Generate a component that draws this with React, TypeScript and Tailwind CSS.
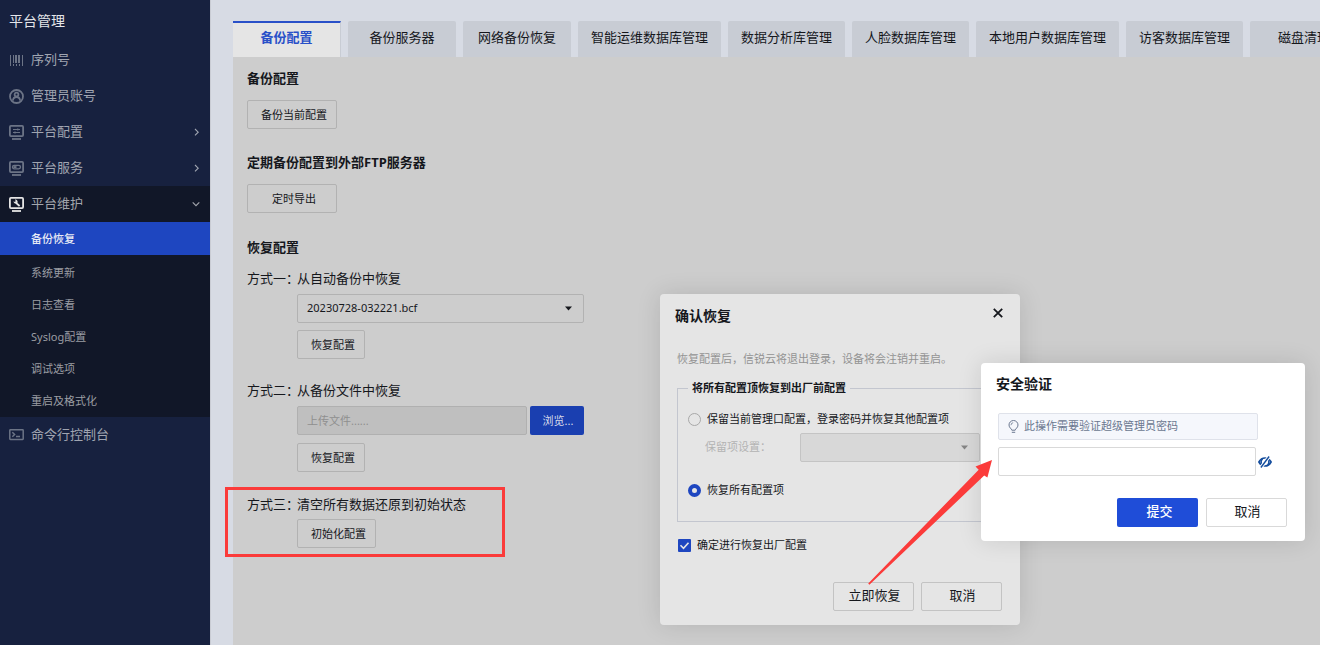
import type { ReactNode } from "react";

const tabs = [
  "备份配置",
  "备份服务器",
  "网络备份恢复",
  "智能运维数据库管理",
  "数据分析库管理",
  "人脸数据库管理",
  "本地用户数据库管理",
  "访客数据库管理",
  "磁盘清理",
];

const subItems = ["系统更新", "日志查看", "Syslog配置", "调试选项", "重启及格式化"];

function BarcodeIcon() {
  return (
    <svg className="size-[15px]" viewBox="0 0 15 15" fill="currentColor" aria-hidden="true">
      <path d="M1 2h1v11H1zM13 2h1v11h-1zM4 2h1v8H4zM6 2h2v8H6zM9 2h2v8H9zM4 11h1v2H4zM7 11h1v2H7zM10 11h1v2h-1z" />
    </svg>
  );
}

function AdminIcon() {
  return (
    <svg className="size-[15px]" viewBox="0 0 15 15" fill="none" stroke="currentColor" strokeWidth="1.8" aria-hidden="true">
      <circle cx="7.5" cy="7.5" r="6.5" />
      <circle cx="7.5" cy="5.6" r="1.9" />
      <path d="M3.800 11.600c.4-2.400 1.600-3.600 3.700-3.600s3.300 1.200 3.700 3.600" />
    </svg>
  );
}

function MonitorIcon({ children }: { children: ReactNode }) {
  return (
    <svg className="size-[15px]" viewBox="0 0 15 15" fill="none" stroke="currentColor" strokeWidth="1.800" aria-hidden="true">
      <rect x=".9" y=".9" width="13.200" height="10.200" rx="1" />
      <path d="M3 14h9" />
      {children}
    </svg>
  );
}

function ConsoleIcon() {
  return (
    <svg className="size-[15px]" viewBox="0 0 15 15" fill="none" stroke="currentColor" strokeWidth="1.5" aria-hidden="true">
      <rect x=".8" y="1.800" width="13.400" height="9.600" rx=".6" />
      <path d="M3.300 4.300 5.600 6.500 3.300 8.700M7 8.500h4" />
    </svg>
  );
}

function Chevron({ open }: { open?: boolean }) {
  return (
    <svg className="size-2" viewBox="0 0 8 8" fill="none" stroke="currentColor" strokeWidth="1.100" aria-hidden="true">
      <path d={open ? "M.7 2.300 4 5.600l3.300-3.300" : "M3 1 6.200 4.200 3 7.400"} />
    </svg>
  );
}

function NavItem({
  icon,
  label,
  chevron,
  open,
}: {
  icon: ReactNode;
  label: string;
  chevron?: boolean;
  open?: boolean;
}) {
  return (
    <a
      href="#"
      className={
        open
          ? "flex h-9 items-center gap-[7px] bg-[#111728] pr-[10px] pl-[9px] text-[#a3a6ad]"
          : "flex h-9 items-center gap-[7px] pr-[10px] pl-[9px] text-[#a0a5b1]"
      }
    >
      <span className={open ? "text-[#e5e5e5]" : "text-[#6c7486]"}>{icon}</span>
      <span className="flex-1 text-[13px]">{label}</span>
      {chevron && <Chevron open={open} />}
    </a>
  );
}

function Sidebar() {
  return (
    <nav className="w-[210px] shrink-0 bg-[#17213f]">
      <h1 className="flex h-[42px] items-center pb-0.5 pl-[9px] text-[14px] text-[#e4e6ea]">平台管理</h1>
      <NavItem icon={<BarcodeIcon />} label="序列号" />
      <NavItem icon={<AdminIcon />} label="管理员账号" />
      <NavItem
        chevron
        label="平台配置"
        icon={
          <MonitorIcon>
            <path strokeWidth="1" d="M4 4.500h7M4 7.500h7M8.800 3.400v2.200M6 6.400v2.200" />
          </MonitorIcon>
        }
      />
      <NavItem
        chevron
        label="平台服务"
        icon={
          <MonitorIcon>
            <rect x="3.500" y="4.400" width="8" height="3.400" rx="1.700" strokeWidth="1.300" />
            <path strokeWidth="2" d="M4.500 6.100h3" />
          </MonitorIcon>
        }
      />
      <NavItem
        chevron
        open
        label="平台维护"
        icon={
          <MonitorIcon>
            <path strokeWidth="1.800" d="m7 5.800 3.600 3.200" />
            <path
              stroke="none"
              fill="currentColor"
              d="M5.900 2.600a2.300 2.300 0 0 1 2.500 3.300 2.300 2.300 0 0 1-3.900-1.600l1.500.6.700-.8z"
            />
          </MonitorIcon>
        }
      />
      <a href="#" className="flex h-[33px] items-center pt-px bg-[#1e46c0] pl-[31px] text-[11px] font-medium text-[#e8ebf5]">
        备份恢复
      </a>
      <div className="bg-[#111728] pt-0.5">
        {subItems.map((item) => (
          <a key={item} href="#" className="flex h-8 items-center pl-[31px] text-[11px] text-[#9b9da3]">
            {item}
          </a>
        ))}
      </div>
      <NavItem icon={<ConsoleIcon />} label="命令行控制台" />
    </nav>
  );
}

function PanelButton({ children, wide }: { children: ReactNode; wide?: boolean }) {
  return (
    <button
      type="button"
      className={
        wide
          ? "block h-[29px] min-w-[90px] rounded-xs border border-[#b2b2b2] pt-0.5 pr-[9px] pl-[13px] text-[11px]"
          : "block h-[29px] rounded-xs border border-[#b2b2b2] pt-0.5 pr-[9px] pl-[13px] text-[11px]"
      }
    >
      {children}
    </button>
  );
}

function DialogButton({ children, primary }: { children: ReactNode; primary?: boolean }) {
  return (
    <button
      type="button"
      className={
        primary
          ? "h-[29px] w-[81px] rounded-xs bg-[#1f4dd8] pb-0.5 pl-1 text-[13px] font-medium text-white"
          : "h-[29px] w-[81px] rounded-xs border border-black/15 pb-0.5 pl-0.5 text-[13px]"
      }
    >
      {children}
    </button>
  );
}

function Caret() {
  return (
    <svg className="pointer-events-none absolute top-3 right-3 h-[5px] w-[7px]" viewBox="0 0 7 5" aria-hidden="true">
      <path d="M0 .5h7L3.500 4.500z" fill="currentColor" />
    </svg>
  );
}

function MethodTitle({ step, title }: { step: string; title: string }) {
  return (
    <h3 className="flex text-[13px] leading-5">
      <span className="w-[50px] whitespace-nowrap">{step}</span>
      <span>{title}</span>
    </h3>
  );
}

function BackupPanel() {
  return (
    <section className="flex-1 bg-[#cdcdcd] px-[14px] pt-[11px] pb-8">
      <h2 className="mb-3 text-[13px] leading-5 font-bold">备份配置</h2>
      <PanelButton wide>备份当前配置</PanelButton>

      <h2 className="mt-[23px] mb-3 text-[13px] leading-5 font-bold">定期备份配置到外部FTP服务器</h2>
      <PanelButton wide>定时导出</PanelButton>

      <h2 className="mt-6 mb-[11px] text-[13px] leading-5 font-bold">恢复配置</h2>
      <MethodTitle step="方式一：" title="从自动备份中恢复" />
      <div className="mt-[6px] ml-[50px] flex w-[287px] flex-col items-start gap-[7px]">
        <div className="relative w-full">
          <select
            aria-label="自动备份文件"
            className="block h-[29px] w-full appearance-none rounded-xs border border-[#b2b2b2] pl-[9px] text-[11px]"
          >
            <option>20230728-032221.bcf</option>
          </select>
          <Caret />
        </div>
        <PanelButton>恢复配置</PanelButton>
      </div>

      <div className="mt-[21px]">
        <MethodTitle step="方式二：" title="从备份文件中恢复" />
        <div className="mt-[6px] ml-[50px] flex w-[287px] flex-col items-start gap-2">
          <div className="flex w-full gap-[3px]">
            <input
              type="text"
              disabled
              aria-label="上传文件"
              placeholder="上传文件......"
              className="h-[29px] min-w-0 flex-1 rounded-xs border border-[#b0b0b0] bg-[#bfbfbf] pl-[9px] text-[11px] placeholder:text-[#8f8f8f]"
            />
            <button type="button" className="h-[29px] w-[54px] rounded-xs bg-[#1a3fb0] pt-0.5 pl-0.5 text-[11px] text-[#d8dcea]">
              浏览...
            </button>
          </div>
          <PanelButton>恢复配置</PanelButton>
        </div>
      </div>

      <div className="relative mt-[22px] w-fit">
        <MethodTitle step="方式三：" title="清空所有数据还原到初始状态" />
        <div className="mt-[5px] ml-[50px]">
          <PanelButton>初始化配置</PanelButton>
        </div>
        <div className="pointer-events-none absolute -top-[7px] -bottom-[9px] -left-[22px] w-[280px] border-3 border-[#fb3b3a]" />
      </div>
    </section>
  );
}

function RestoreDialog() {
  return (
    <div
      role="dialog"
      aria-label="确认恢复"
      className="absolute top-[294px] left-[660px] w-[360px] rounded-sm bg-[#e5e5e5] pt-3 pr-[18px] pb-[14px] pl-[17px] shadow-[0_0_24px_rgba(0,0,0,0.12)]"
    >
      <div className="-ml-0.5 flex items-start justify-between">
        <h2 className="text-[14px] leading-5 font-bold">确认恢复</h2>
        <button type="button" aria-label="关闭" className="-mr-px pt-0.5">
          <svg className="size-[10px]" viewBox="0 0 10 10" fill="none" stroke="currentColor" strokeWidth="1.800">
            <path d="m.8.800 8.400 8.400M9.200.800.8 9.200" />
          </svg>
        </button>
      </div>
      <p className="mt-[23px] text-[11px] leading-5 text-[#939393]">恢复配置后，信锐云将退出登录，设备将会注销并重启。</p>
      <fieldset className="mt-[9px] border border-[#c3c6cf] pt-[11px] pb-[21px] pl-[10px]">
        <legend className="px-1 text-[11px] leading-5 font-bold">将所有配置顶恢复到出厂前配置</legend>
        <label className="flex h-5 items-center gap-[6px] text-[11px]">
          <input
            type="radio"
            name="scope"
            className="size-[13px] appearance-none rounded-full border border-[#a8a8a8] checked:border-4 checked:border-[#1e46c0]"
          />
          保留当前管理口配置，登录密码并恢复其他配置项
        </label>
        <div className="mt-1 flex items-center pl-[17px]">
          <label htmlFor="keep" className="w-[95px] text-[11px] text-[#b3b3b3]">
            保留项设置：
          </label>
          <div className="relative w-[180px] text-[#858585]">
            <select
              id="keep"
              disabled
              className="block h-[29px] w-full appearance-none rounded-xs border border-[#c4c4c4] bg-[#d8d8d8] text-[11px]"
            />
            <Caret />
          </div>
        </div>
        <label className="mt-[18px] flex h-5 items-center gap-[6px] text-[11px]">
          <input
            type="radio"
            name="scope"
            defaultChecked
            className="size-[13px] appearance-none rounded-full border border-[#a8a8a8] checked:border-4 checked:border-[#1e46c0]"
          />
          恢复所有配置项
        </label>
      </fieldset>
      <label className="mt-[13px] flex h-5 w-fit items-center gap-[6px] pl-px text-[11px]">
        <span className="relative size-[13px]">
          <input type="checkbox" defaultChecked className="block size-[13px] appearance-none rounded-[1px] bg-[#1e46c0]" />
          <svg
            className="pointer-events-none absolute inset-0 size-[13px]"
            viewBox="0 0 13 13"
            fill="none"
            stroke="#e5e5e5"
            strokeWidth="1.600"
            aria-hidden="true"
          >
            <path d="m2.500 6.300 3 3 5-5.600" />
          </svg>
        </span>
        确定进行恢复出厂配置
      </label>
      <div className="mt-[27px] flex justify-end gap-[7px]">
        <DialogButton>立即恢复</DialogButton>
        <DialogButton>取消</DialogButton>
      </div>
    </div>
  );
}

function VerifyDialog() {
  return (
    <div
      role="dialog"
      aria-label="安全验证"
      className="absolute top-[363px] left-[981px] w-[324px] rounded-sm bg-white pt-[11px] pr-[18px] pb-[14px] pl-[17px] shadow-[0_0_24px_rgba(0,0,0,0.12)]"
    >
      <h2 className="-ml-0.5 text-[14px] leading-5 font-bold">安全验证</h2>
      <p className="mt-[19px] flex h-[27px] w-[260px] items-center gap-[5px] rounded-xs border border-[#dfe2ea] bg-[#f5f7fc] pl-[9px] text-[11px] text-[#6b7890]">
        <svg className="h-[13px] w-[11px]" viewBox="0 0 11 13" fill="none" stroke="currentColor" aria-hidden="true">
          <path d="M3.800 10.200C3.800 8.700 1 7.900 1 5a4.500 4.500 0 0 1 9 0c0 2.900-2.800 3.700-2.800 5.200zM3.800 12.300h3.400" />
          <path strokeWidth=".8" d="M3 5.200A2.500 2.500 0 0 1 5.200 2.700" />
        </svg>
        此操作需要验证超级管理员密码
      </p>
      <div className="mt-[7px] flex items-center gap-0.5">
        <input
          type="password"
          aria-label="超级管理员密码"
          className="h-[29px] w-[258px] rounded-xs border border-[#d9d9d9] px-2 text-[11px]"
        />
        <button type="button" aria-label="显示密码">
          <svg className="h-3 w-[14px]" viewBox="0 0 14 12" fill="none" stroke="#164e9e" aria-hidden="true">
            <path strokeWidth="1.600" d="M.9 6C2.300 3.400 4.400 2 7 2s4.700 1.400 6.100 4c-1.400 2.600-3.500 4-6.100 4S2.300 8.600.9 6z" />
            <path strokeWidth="1.600" d="M4.600 2.800a3.800 3.800 0 0 0-.4 5.800M9.600 3.200a3.800 3.800 0 0 1 0 5.800" />
            <path stroke="#fff" strokeWidth="3.400" d="M2.500 12 11.500 0" />
            <path strokeWidth="1.400" d="M2.900 11.500 11.100.5" />
          </svg>
        </button>
      </div>
      <div className="mt-[22px] flex justify-end gap-2">
        <DialogButton primary>提交</DialogButton>
        <DialogButton>取消</DialogButton>
      </div>
    </div>
  );
}

export default function App() {
  return (
    <div
      lang="zh-CN"
      className="relative flex min-h-screen overflow-hidden bg-[#d7dbe4] font-['Noto_Sans','Noto_Sans_CJK_SC',sans-serif] text-[#15171c]"
    >
      <Sidebar />
      <main className="flex min-w-0 flex-1 flex-col border-l border-[#c9ccd4] pt-[21px] pl-[22px]">
        <div role="tablist" className="flex gap-[7px] overflow-hidden">
          {tabs.map((tab, index) => (
            <button
              key={tab}
              type="button"
              role="tab"
              aria-selected={index === 0}
              className={
                index === 0
                  ? "h-9 min-w-[108px] shrink-0 border-t-2 border-r border-t-[#2950c8] border-r-[#c8ccd4] bg-[#e5e5e5] px-[13px] pb-1 text-[13px] font-bold text-[#2950c8]"
                  : "h-9 min-w-[108px] shrink-0 rounded-t-xs bg-[#c8ccd4] px-[13px] pb-0.5 text-[13px]"
              }
            >
              {tab}
            </button>
          ))}
        </div>
        <BackupPanel />
      </main>
      <RestoreDialog />
      <VerifyDialog />
      <svg
        className="pointer-events-none absolute top-[460px] left-[867px] h-[126px] w-[126px]"
        viewBox="0 0 126 126"
        fill="#fb3b3a"
        aria-hidden="true"
      >
        <path d="M125 0 108.500 6.500l3.200 3.200L1.200 123.600l1.200 1.100L117.200 15.500l3.200 2z" />
      </svg>
    </div>
  );
}
